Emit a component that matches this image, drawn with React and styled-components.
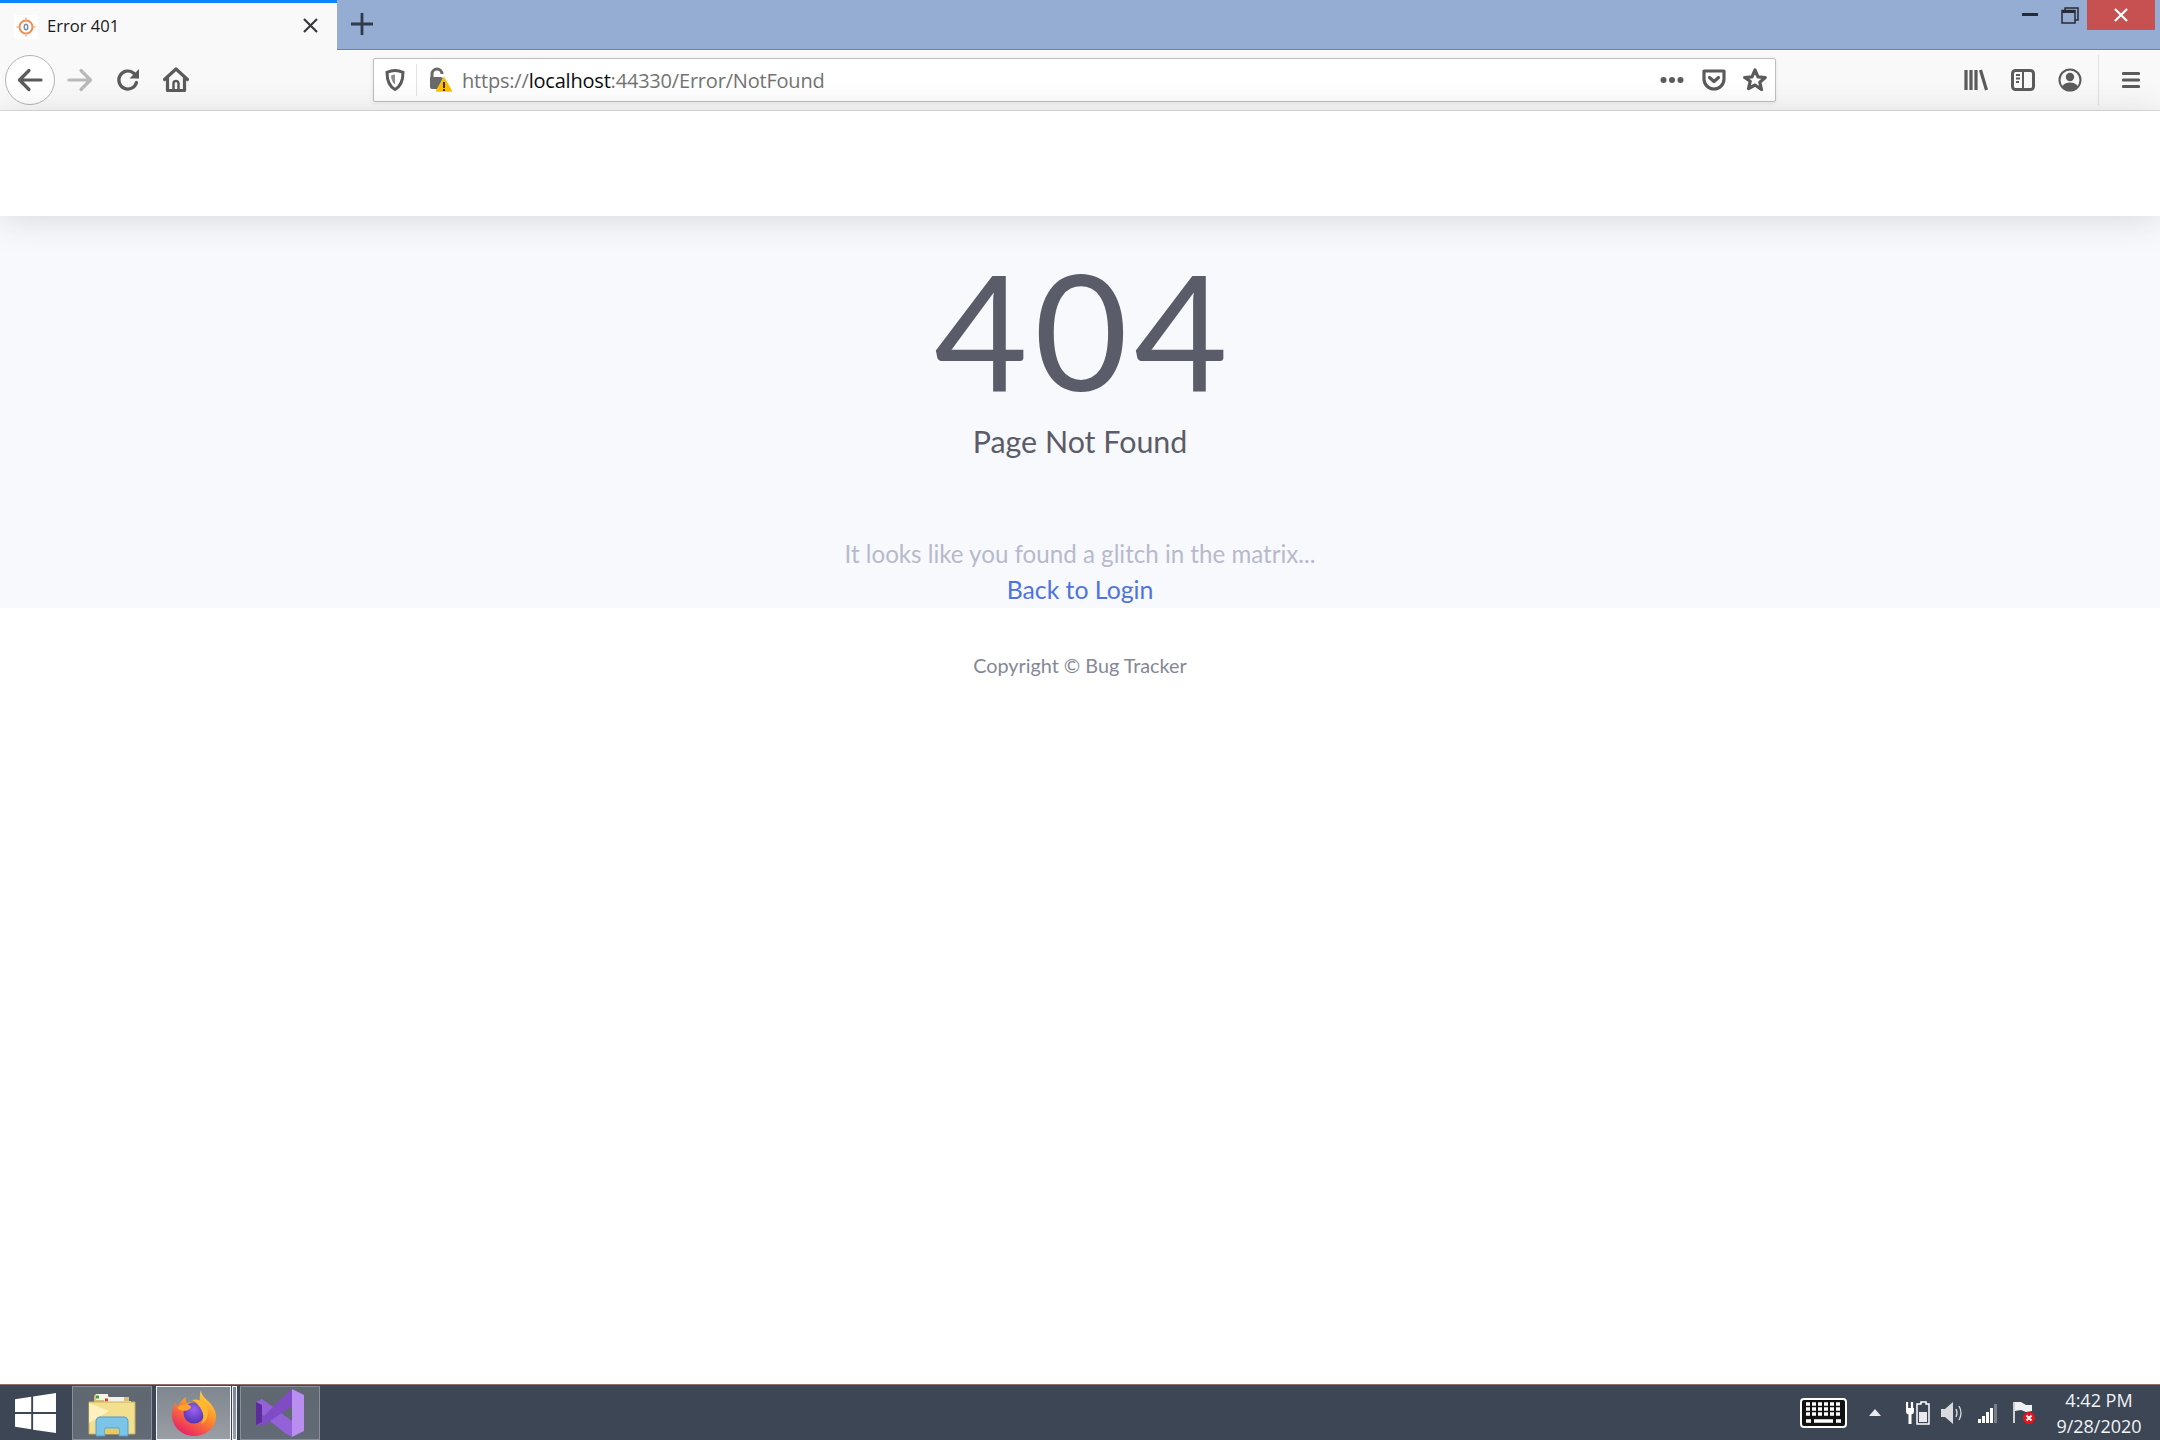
import React from 'react'
import styled, { createGlobalStyle } from 'styled-components'

const GlobalStyle = createGlobalStyle`
  html, body { margin: 0; padding: 0; height: 100%; background: #fff; }
  #root { height: 100%; }
`

const Screen = styled.div`
  display: flex;
  flex-direction: column;
  height: 1440px;
  overflow: hidden;
  font-family: "Open Sans", "Liberation Sans", sans-serif;
`

/* browser chrome */
const TabBar = styled.div`
  display: flex;
  height: 50px;
  flex: none;
  background: #96add3;
  border-bottom: 1px solid #6c82a8;
  box-sizing: border-box;
`
const Tab = styled.div`
  display: flex;
  align-items: center;
  width: 337px;
  height: 50px;
  box-sizing: border-box;
  padding: 3px 0 0 14px;
  background: #f9f9f9;
  border-top: 3px solid #0a84ff;
  color: #18181a;
  font-size: 16.6px;
`
const Favicon = styled.span`
  display: flex;
  align-items: center;
  justify-content: center;
  width: 24px;
  height: 24px;
  background: #fff;
  margin: -2px 9px 0 0;
`
const TabTitle = styled.span`
  flex: 1;
  margin-top: -5px;
`
const TabClose = styled.span`
  display: flex;
  margin: -5px 19px 0 0;
`
const NewTab = styled.span`
  display: flex;
  margin: 13px 0 0 14px;
  height: 22px;
`
const WindowButtons = styled.div`
  display: flex;
  margin-left: auto;
  padding-right: 5px;
`
const WindowButton = styled.span`
  display: flex;
  align-items: center;
  justify-content: center;
  width: ${p => p.$w}px;
  height: 30px;
  background: ${p => p.$bg || 'transparent'};
`
const NavBar = styled.div`
  display: flex;
  align-items: center;
  flex: none;
  height: 61px;
  box-sizing: border-box;
  padding-left: 5px;
  background: #f9f9f9;
  border-bottom: 1px solid #dcdcdc;
`
const NavButton = styled.span`
  display: flex;
  align-items: center;
  justify-content: center;
  flex: none;
  width: ${p => p.$w || 48}px;
  height: 50px;
  box-sizing: border-box;
  ${p => p.$round && 'border: 1px solid #b4b4b4; border-radius: 50%; background: #fff; margin-right: 1px;'}
`
const AddressBar = styled.div`
  display: flex;
  align-items: center;
  flex: none;
  width: 1403px;
  height: 44px;
  margin-left: 173px;
  box-sizing: border-box;
  background: #fff;
  border: 1px solid #bebebe;
  border-radius: 2px;
  box-shadow: 0 1px 4px rgba(0, 0, 0, 0.08);
`
const ShieldBox = styled.span`
  display: flex;
  align-items: center;
  justify-content: center;
  width: 42px;
  height: 32px;
  border-right: 1px solid #e4e4e4;
`
const LockBox = styled.span`
  display: flex;
  width: 45px;
  justify-content: center;
  box-sizing: border-box;
`
const Url = styled.span`
  flex: 1;
  color: #737373;
  font-size: 20px;
  letter-spacing: -0.2px;
  b { font-weight: 400; color: #0c0c0d; }
`
const AddressIcon = styled.span`
  display: flex;
  justify-content: center;
  width: ${p => p.$w || 42}px;
`
const RightTools = styled.div`
  display: flex;
  align-items: center;
  margin-left: 177px;
`
const ToolDivider = styled.span`
  width: 1px;
  height: 50px;
  margin: 0 10px 0 5px;
  background: #e0e0e0;
`

/* the page */
const PageHeader = styled.header`
  flex: none;
  height: 105px;
  background: #fff;
  box-shadow: 0 3px 35px rgba(58, 59, 69, 0.17);
  position: relative;
  z-index: 1;
`
const Main = styled.main`
  flex: none;
  height: 392px;
  box-sizing: border-box;
  background: #f8f9fc;
  display: flex;
  flex-direction: column;
  align-items: center;
  padding-top: 20px;
`
const ErrorCode = styled.div`
  font-family: Lato, "Open Sans", sans-serif;
  font-weight: 400;
  font-size: 162px;
  line-height: 186px;
  height: 186px;
  letter-spacing: 6px;
  padding-left: 8px;
  color: #5a5c69;
`
const ErrorTitle = styled.div`
  font-family: Lato, sans-serif;
  font-size: 30.4px;
  line-height: 38px;
  color: #5a5c69;
`
const ErrorNote = styled.div`
  font-family: Lato, sans-serif;
  font-size: 24.15px;
  line-height: 36px;
  margin-top: 76px;
  color: #b7b9cc;
`
const BackLink = styled.a`
  font-family: Lato, sans-serif;
  font-size: 24.8px;
  line-height: 35px;
  color: #4e73df;
  text-decoration: none;
`
const PageFooter = styled.footer`
  flex: 1;
  padding-top: 43px;
  text-align: center;
  font-family: Lato, sans-serif;
  font-size: 19.8px;
  line-height: 28px;
  color: #858796;
`

/* windows taskbar */
const Taskbar = styled.div`
  display: flex;
  align-items: center;
  flex: none;
  height: 56px;
  box-sizing: border-box;
  background: #3c4655;
  border-top: 1px solid #8d7068;
`
const StartButton = styled.span`
  display: flex;
  align-items: center;
  justify-content: center;
  width: 70px;
  height: 54px;
  margin-right: 2px;
`
const TaskButton = styled.span`
  display: flex;
  align-items: center;
  justify-content: center;
  box-sizing: border-box;
  flex: none;
  width: ${p => p.$w}px;
  height: 54px;
  margin-right: ${p => p.$mr || 0}px;
  background: ${p => p.$active
    ? 'linear-gradient(#80868f, #9a9ea5)'
    : 'linear-gradient(#5f6771, #626a75)'};
  border: ${p => p.$active ? '1px solid #f2f3f4' : '1px solid #8a9099'};
`
const Tray = styled.div`
  display: flex;
  align-items: center;
  margin-left: auto;
`
const TrayIcon = styled.span`
  display: flex;
  justify-content: center;
  width: ${p => p.$w}px;
`
const Clock = styled.div`
  width: 114px;
  margin-right: 4px;
  text-align: center;
  color: #f2f3f5;
  font-size: 18px;
  line-height: 26px;
`

const G = '#5b5b5c'
const stroke = { fill: 'none', stroke: G, strokeWidth: 3.2, strokeLinecap: 'round', strokeLinejoin: 'round' }

const ArrowBack = () => (
  <svg width="26" height="24" viewBox="0 0 26 24" {...stroke}><path d="M24 12H3M12 2.5L2.5 12l9.500 9.500" /></svg>
)
const ArrowForward = () => (
  <svg width="26" height="24" viewBox="0 0 26 24" {...stroke} stroke="#b9b9b9"><path d="M2 12h21M14 2.5l9.500 9.500-9.500 9.500" /></svg>
)
const Reload = () => (
  <svg width="24" height="24" viewBox="0 0 24 24" {...stroke}>
    <path d="M20.5 14.500A9 9 0 1 1 17.5 5L21 8.500" />
    <path d="M23 1v9.500h-9.500z" fill={G} stroke="none" />
  </svg>
)
const Home = () => (
  <svg width="26" height="26" viewBox="0 0 26 26" {...stroke}>
    <path d="M1.5 12.500L13 2l11.500 10.500" />
    <path d="M4.5 11v12.500h17V11" />
    <path d="M10.5 23v-6.500a2.500 2.500 0 0 1 5 0V23" strokeWidth="2.5" />
  </svg>
)
const Shield = () => (
  <svg width="20" height="22" viewBox="0 0 20 22">
    <path d="M10 1.500c3 0 5.500.7 8 1.800 0 7-1 13.500-8 17.200C3 16.800 2 10.300 2 3.300 4.500 2.200 7 1.500 10 1.500z" fill="none" stroke={G} strokeWidth="3" />
    <path d="M10 5.500v10c-2.500-1.800-3.800-5-4-9 1.300-.6 2.700-1 4-1z" fill="#8d8d8d" />
  </svg>
)
const LockWarning = () => (
  <svg width="24" height="26" viewBox="0 0 24 26">
    <path d="M4 10V7a5 5 0 0 1 10 0" fill="none" stroke="#6a6a6a" strokeWidth="3" />
    <path d="M2 10h11l2 1-5 10v1H4a2 2 0 0 1-2-2z" fill="#6a6a6a" />
    <path d="M16 10.500l8 14a.8.8 0 0 1-.7 1.200H8.700a.8.8 0 0 1-.7-1.200z" fill="#ffbf00" transform="translate(0 -1)" />
    <rect x="15" y="15" width="2" height="6" fill="#3a2f00" />
    <rect x="15" y="22" width="2" height="2" fill="#3a2f00" />
  </svg>
)
const Dots = () => (
  <svg width="24" height="6" viewBox="0 0 24 6" fill={G}><circle cx="3.5" cy="3" r="3" /><circle cx="12" cy="3" r="3" /><circle cx="20.5" cy="3" r="3" /></svg>
)
const Pocket = () => (
  <svg width="24" height="22" viewBox="0 0 24 22" {...stroke}>
    <path d="M2 2h20v8c0 5.500-4.500 10-10 10S2 15.500 2 10z" />
    <path d="M7.5 8.500L12 12.500l4.500-4" />
  </svg>
)
const Star = () => (
  <svg width="24" height="24" viewBox="0 0 24 24" {...stroke}>
    <path d="M12 2l3 6.800 7.300.7-5.500 4.800 1.700 7.200L12 17l-6.500 3.500 1.700-7.200L1.700 9.500 9 8.800z" />
  </svg>
)
const Library = () => (
  <svg width="24" height="22" viewBox="0 0 24 22" {...stroke} strokeLinecap="butt">
    <path d="M2 1v20M7 1v20M12 1v20M16.500 1L22.500 21" />
  </svg>
)
const Sidebar = () => (
  <svg width="24" height="22" viewBox="0 0 24 22">
    <rect x="1.5" y="1.5" width="21" height="19" rx="3" fill="none" stroke={G} strokeWidth="3" />
    <path d="M12 2v18" stroke={G} strokeWidth="2" />
    <path d="M5 6h4M5 9.500h4M5 13h3" stroke={G} strokeWidth="1.8" />
  </svg>
)
const Account = () => (
  <svg width="24" height="24" viewBox="0 0 24 24">
    <circle cx="12" cy="12" r="10.5" fill="none" stroke={G} strokeWidth="2" />
    <circle cx="12" cy="9" r="4.2" fill={G} />
    <path d="M4.500 18.500c1-3 4-4 7.500-4s6.500 1 7.500 4C17.500 21 15 22 12 22s-5.500-1-7.500-3.500z" fill={G} />
  </svg>
)
const Menu = () => (
  <svg width="18" height="18" viewBox="0 0 18 18" {...stroke}><path d="M1.500 2.500h15M1.500 9h15M1.500 15.500h15" /></svg>
)
const FaviconIcon = () => (
  <svg width="20" height="20" viewBox="0 0 20 20">
    <circle cx="10" cy="10" r="6.5" fill="#fff" stroke="#f08a50" strokeWidth="2" />
    <path d="M10 0.500v3M10 16.500v3M0.500 10h3M16.500 10h3" stroke="#f6b08a" strokeWidth="1.5" />
    <ellipse cx="10" cy="10" rx="2.5" ry="3.5" fill="#7d8da3" />
    <ellipse cx="10" cy="10" rx="1" ry="2" fill="#fff" />
  </svg>
)
const Cross = ({ size = 15, color = '#38383d', w = 2.2 }) => (
  <svg width={size} height={size} viewBox="0 0 15 15" stroke={color} strokeWidth={w} fill="none"><path d="M1 1l13 13M14 1L1 14" /></svg>
)
const Plus = () => (
  <svg width="22" height="22" viewBox="0 0 22 22" stroke="#2f3a4a" strokeWidth="2.8" fill="none"><path d="M11 0v22M0 11h22" /></svg>
)
const Minimize = () => (
  <svg width="16" height="4" viewBox="0 0 16 4"><rect width="16" height="3" fill="#262b36" /></svg>
)
const Restore = () => (
  <svg width="18" height="17" viewBox="0 0 18 17" fill="none" stroke="#262b36" strokeWidth="1.5">
    <path d="M4 3V1h13v12h-3" />
    <rect x="1" y="3.5" width="13" height="12.5" />
    <path d="M1 4.500h13" strokeWidth="3" />
  </svg>
)

const WindowsLogo = () => (
  <svg width="41" height="40" viewBox="0 0 43 42" fill="#fff">
    <path d="M0 6.500L17 4v16H0zM19 3.700L43 0v20H19zM0 22h17v16L0 35.500zM19 22h24v20l-24-3.500z" />
  </svg>
)
const ExplorerIcon = () => (
  <svg width="48" height="48" viewBox="0 0 48 48">
    <path d="M6 8q0-3 3-3h10l2 3h20v8H6z" fill="#d8bf74" />
    <rect x="8" y="5" width="12" height="6" fill="#f5f3e8" />
    <rect x="8" y="6.5" width="3" height="3" fill="#3fa53a" />
    <rect x="16" y="8" width="20" height="6" fill="#f5f3e8" />
    <rect x="17" y="9.5" width="3" height="3" fill="#d9402c" />
    <rect x="28" y="12" width="15" height="5" fill="#f5f3e8" />
    <rect x="29" y="13" width="3" height="3" fill="#2a8fd0" />
    <path d="M1 13h46v32H1z" fill="#f3e08f" stroke="#c9ad62" />
    <path d="M1 14l20 8-20 12z" fill="#fff6c8" opacity=".8" />
    <path d="M8 47V33q0-5 4-5h24q4 0 4 5v14h-9v-8H17v8z" fill="#7cc4e8" stroke="#4a9ccc" />
    <rect x="17" y="40" width="14" height="5" fill="#e8c95a" />
  </svg>
)
const FirefoxIcon = () => (
  <svg width="46" height="48" viewBox="0 0 46 48">
    <defs>
      <linearGradient id="ffOuter" x1="0.8" y1="0" x2="0.2" y2="1">
        <stop offset="0" stopColor="#ffe03a" />
        <stop offset="0.45" stopColor="#ff8a2a" />
        <stop offset="1" stopColor="#e5176f" />
      </linearGradient>
      <radialGradient id="ffGlobe" cx="0.5" cy="0.35" r="0.7">
        <stop offset="0" stopColor="#9a62f2" />
        <stop offset="1" stopColor="#4d2fb0" />
      </radialGradient>
    </defs>
    <path d="M30 1c0 5 4 8 8 12 5 5 7 10 7 14 0 12-10 20-22 20S1 38 1 26c0-6 2-10 4-13 0 2 1 4 2 5 1-4 5-8 8-10-1 3 0 5 1 6 4-1 10 0 13 2 0-5-1-10 1-15z" fill="url(#ffOuter)" />
    <circle cx="23" cy="24" r="10.5" fill="url(#ffGlobe)" />
    <path d="M6 19c3-4 8-4 12-3 3 1 2 3.500 0 4.500-3 2-7 1-9 .5z" fill="#ffa22e" />
    <path d="M21 11c7-2 13 2 15 8 2 7 0 13-6 16 3-4 3-9 1-13-2-5-6-9-10-11z" fill="#ffb92e" />
  </svg>
)
const VisualStudioIcon = () => (
  <svg width="50" height="50" viewBox="0 0 50 50">
    <path d="M37 1l12 6v36l-12 6z" fill="#b98ef0" />
    <path d="M1 14l6-3 30 22v16l-7-4L1 22z" fill="#9462d8" />
    <path d="M37 1v17L8 38l-7-2 24-24z" fill="#7f4cc6" />
    <path d="M1 14l6 3v17l-6 3z" fill="#5e2b9c" />
  </svg>
)
const KeyboardIcon = () => (
  <svg width="47" height="30" viewBox="0 0 47 30">
    <rect x="1" y="1" width="45" height="28" rx="3" fill="#111" stroke="#fff" strokeWidth="2" />
    <path d="M6 6h35M6 11h35M6 16h35" stroke="#fff" strokeWidth="3.5" strokeDasharray="4 2" />
    <path d="M6 23h5M14 23h19M36 23h5" stroke="#fff" strokeWidth="3.5" />
  </svg>
)
const Caret = () => (
  <svg width="12" height="7" viewBox="0 0 12 7" fill="#e8eaee"><path d="M6 0l6 7H0z" /></svg>
)
const Battery = () => (
  <svg width="24" height="24" viewBox="0 0 24 24">
    <path d="M1 1v6M6 1v6" stroke="#fff" strokeWidth="2.2" />
    <path d="M0 7h8v3q0 3-2.500 3.500V23h-3V13.500Q0 13 0 10z" fill="#fff" />
    <path d="M15 1h5v2h3v20H11V3h4z" fill="#3c4655" stroke="#fff" strokeWidth="1.5" />
    <rect x="13" y="11" width="8" height="10" fill="#e8eaee" />
  </svg>
)
const Volume = () => (
  <svg width="24" height="24" viewBox="0 0 24 24">
    <path d="M1 8h4l8-7v22l-8-7H1z" fill="#d8dadf" />
    <path d="M16 8q2 4 0 8M19 5q4 7 0 14" stroke="#d8dadf" strokeWidth="1.3" fill="none" />
  </svg>
)
const Signal = () => (
  <svg width="20" height="20" viewBox="0 0 20 20">
    <rect x="0" y="16" width="3" height="4" fill="#fff" />
    <rect x="4" y="13" width="3" height="7" fill="#fff" />
    <rect x="8" y="9" width="3" height="11" fill="#fff" />
    <rect x="12" y="5" width="3" height="15" fill="#fff" />
    <rect x="16" y="1" width="3" height="19" fill="#7a7f87" />
  </svg>
)
const Flag = () => (
  <svg width="24" height="24" viewBox="0 0 24 24">
    <path d="M2 1v21" stroke="#fff" strokeWidth="1.5" />
    <path d="M3 1h6l5 3 6 0v6l-6 1-5-2-6 1z" fill="#f0f1f3" />
    <circle cx="17" cy="17" r="6" fill="#e8121c" />
    <path d="M14.500 14.500l5 5M19.500 14.500l-5 5" stroke="#fff" strokeWidth="1.8" />
  </svg>
)

const App = () => (
  <Screen>
    <GlobalStyle />
    <TabBar>
      <Tab>
        <Favicon><FaviconIcon /></Favicon>
        <TabTitle>Error 401</TabTitle>
        <TabClose><Cross /></TabClose>
      </Tab>
      <NewTab><Plus /></NewTab>
      <WindowButtons>
        <WindowButton $w={46}><Minimize /></WindowButton>
        <WindowButton $w={34}><Restore /></WindowButton>
        <WindowButton $w={68} $bg="#c75050"><Cross size={14} color="#fff" w={2.4} /></WindowButton>
      </WindowButtons>
    </TabBar>
    <NavBar>
      <NavButton $w={50} $round><ArrowBack /></NavButton>
      <NavButton><ArrowForward /></NavButton>
      <NavButton><Reload /></NavButton>
      <NavButton><Home /></NavButton>
      <AddressBar>
        <ShieldBox><Shield /></ShieldBox>
        <LockBox><LockWarning /></LockBox>
        <Url>https://<b>localhost</b>:44330/Error/NotFound</Url>
        <AddressIcon><Dots /></AddressIcon>
        <AddressIcon><Pocket /></AddressIcon>
        <AddressIcon $w={40}><Star /></AddressIcon>
      </AddressBar>
      <RightTools>
        <NavButton $w={46}><Library /></NavButton>
        <NavButton $w={47}><Sidebar /></NavButton>
        <NavButton $w={47}><Account /></NavButton>
        <ToolDivider />
        <NavButton $w={44}><Menu /></NavButton>
      </RightTools>
    </NavBar>
    <PageHeader />
    <Main>
      <ErrorCode>404</ErrorCode>
      <ErrorTitle>Page Not Found</ErrorTitle>
      <ErrorNote>It looks like you found a glitch in the matrix...</ErrorNote>
      <BackLink href="#">Back to Login</BackLink>
    </Main>
    <PageFooter>Copyright © Bug Tracker</PageFooter>
    <Taskbar>
      <StartButton><WindowsLogo /></StartButton>
      <TaskButton $w={80} $mr={4}><ExplorerIcon /></TaskButton>
      <TaskButton $w={75} $active $mr={1}><FirefoxIcon /></TaskButton>
      <TaskButton $w={5} $active $mr={3} />
      <TaskButton $w={80}><VisualStudioIcon /></TaskButton>
      <Tray>
        <TrayIcon $w={47}><KeyboardIcon /></TrayIcon>
        <TrayIcon $w={55}><Caret /></TrayIcon>
        <TrayIcon $w={32}><Battery /></TrayIcon>
        <TrayIcon $w={36}><Volume /></TrayIcon>
        <TrayIcon $w={36}><Signal /></TrayIcon>
        <TrayIcon $w={36}><Flag /></TrayIcon>
        <Clock>4:42 PM<br />9/28/2020</Clock>
      </Tray>
    </Taskbar>
  </Screen>
)

export default App
